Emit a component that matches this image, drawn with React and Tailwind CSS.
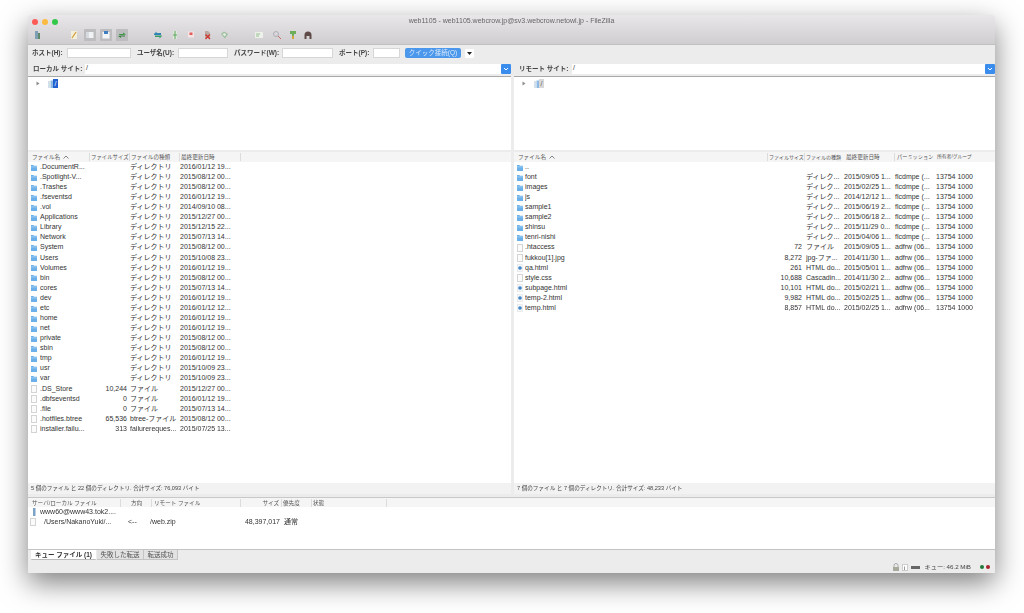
import React from "react";

const font = { fontFamily: '"Liberation Sans", "Noto Sans CJK JP", sans-serif' };

const localFiles = [
  [".DocumentR...", "", "ディレクトリ", "2016/01/12 19...", "d"],
  [".Spotlight-V...", "", "ディレクトリ", "2015/08/12 00...", "d"],
  [".Trashes", "", "ディレクトリ", "2015/08/12 00...", "d"],
  [".fseventsd", "", "ディレクトリ", "2016/01/12 19...", "d"],
  [".vol", "", "ディレクトリ", "2014/09/10 08...", "d"],
  ["Applications", "", "ディレクトリ", "2015/12/27 00...", "d"],
  ["Library", "", "ディレクトリ", "2015/12/15 22...", "d"],
  ["Network", "", "ディレクトリ", "2015/07/13 14...", "d"],
  ["System", "", "ディレクトリ", "2015/08/12 00...", "d"],
  ["Users", "", "ディレクトリ", "2015/10/08 23...", "d"],
  ["Volumes", "", "ディレクトリ", "2016/01/12 19...", "d"],
  ["bin", "", "ディレクトリ", "2015/08/12 00...", "d"],
  ["cores", "", "ディレクトリ", "2015/07/13 14...", "d"],
  ["dev", "", "ディレクトリ", "2016/01/12 19...", "d"],
  ["etc", "", "ディレクトリ", "2016/01/12 12...", "d"],
  ["home", "", "ディレクトリ", "2016/01/12 19...", "d"],
  ["net", "", "ディレクトリ", "2016/01/12 19...", "d"],
  ["private", "", "ディレクトリ", "2015/08/12 00...", "d"],
  ["sbin", "", "ディレクトリ", "2015/08/12 00...", "d"],
  ["tmp", "", "ディレクトリ", "2016/01/12 19...", "d"],
  ["usr", "", "ディレクトリ", "2015/10/09 23...", "d"],
  ["var", "", "ディレクトリ", "2015/10/09 23...", "d"],
  [".DS_Store", "10,244", "ファイル", "2015/12/27 00...", "f"],
  [".dbfseventsd", "0", "ファイル", "2016/01/12 19...", "f"],
  [".file", "0", "ファイル", "2015/07/13 14...", "f"],
  [".hotfiles.btree", "65,536", "btree-ファイル", "2015/08/12 00...", "f"],
  ["installer.failu...", "313", "failurereques...", "2015/07/25 13...", "f"],
];

const dirPerm = "flcdmpe (...";
const filePerm = "adfrw (06...";
const remoteFiles = [
  ["..", "", "", "", "", "", "d"],
  ["font", "", "ディレク...", "2015/09/05 1...", dirPerm, "13754 1000", "d"],
  ["images", "", "ディレク...", "2015/02/25 1...", dirPerm, "13754 1000", "d"],
  ["js", "", "ディレク...", "2014/12/12 1...", dirPerm, "13754 1000", "d"],
  ["sample1", "", "ディレク...", "2015/06/19 2...", dirPerm, "13754 1000", "d"],
  ["sample2", "", "ディレク...", "2015/06/18 2...", dirPerm, "13754 1000", "d"],
  ["shinsu", "", "ディレク...", "2015/11/29 0...", dirPerm, "13754 1000", "d"],
  ["tenri-nishi", "", "ディレク...", "2015/04/06 1...", dirPerm, "13754 1000", "d"],
  [".htaccess", "72", "ファイル", "2015/09/05 1...", filePerm, "13754 1000", "f"],
  ["fukkou[1].jpg", "8,272", "jpg-ファ...", "2014/11/30 1...", filePerm, "13754 1000", "f"],
  ["qa.html", "261", "HTML do...", "2015/05/01 1...", filePerm, "13754 1000", "h"],
  ["style.css", "10,688", "Cascadin...", "2014/11/30 2...", filePerm, "13754 1000", "f"],
  ["subpage.html", "10,101", "HTML do...", "2015/02/21 1...", filePerm, "13754 1000", "h"],
  ["temp-2.html", "9,982", "HTML do...", "2015/02/25 1...", filePerm, "13754 1000", "h"],
  ["temp.html", "8,857", "HTML do...", "2015/02/25 1...", filePerm, "13754 1000", "h"],
];

function FileIcon({ kind }) {
  if (kind === "d") {
    return (
      <svg width="6" height="7" viewBox="0 0 6 7" className="shrink-0">
        <path d="M0 1h2.400l.6.800H6V7H0z" fill="#6cb0ea" />
        <rect x="0" y="2.400" width="6" height="1" fill="#9accf2" />
      </svg>
    );
  }
  if (kind === "h") {
    return (
      <svg width="6" height="8" viewBox="0 0 6 8" className="shrink-0">
        <rect x="0.200" y="0.200" width="5.600" height="7.600" fill="#f4f6f8" stroke="#dcdcdc" strokeWidth="0.400" />
        <circle cx="3" cy="4" r="1.800" fill="#3f86c9" />
      </svg>
    );
  }
  return <div className="w-[6px] h-[8px] shrink-0 bg-[#fbfbfb] border-[0.5px] border-[#d4d4d4]" />;
}

function ToolIcon({ children, boxed }) {
  return (
    <div className={`w-[12px] h-[12px] flex items-center justify-center rounded-[1px] ${boxed ? "bg-[#bdbcbe]" : ""}`}>
      <svg width="10" height="10" viewBox="0 0 10 10">{children}</svg>
    </div>
  );
}

function Toolbar() {
  return (
    <div className="flex items-center h-[12px] pl-[3px] mt-[1px]">
      <ToolIcon>
        <rect x="3" y="1" width="3" height="8" fill="#7f9fb5" />
        <rect x="6" y="3" width="2" height="6" fill="#5f8a6a" />
      </ToolIcon>
      <div className="w-[25px]" />
      <ToolIcon>
        <rect x="2" y="1" width="6" height="8" fill="#f3efd8" />
        <path d="M3 8 7 2" stroke="#d39a38" strokeWidth="1.200" />
      </ToolIcon>
      <div className="w-[4px]" />
      <ToolIcon boxed>
        <rect x="1.500" y="2" width="7" height="6" fill="#f1f2f4" />
        <rect x="1.500" y="2" width="2.400" height="6" fill="#d6dce2" />
      </ToolIcon>
      <div className="w-[4px]" />
      <ToolIcon boxed>
        <rect x="1.500" y="2" width="7" height="6.500" fill="#f4f5f7" />
        <rect x="3" y="1" width="4" height="3" fill="#3f7fc0" />
      </ToolIcon>
      <div className="w-[4px]" />
      <ToolIcon boxed>
        <path d="M2 4h4V2.500L9 4.500 6 5H2z" fill="#3d9a48" />
        <path d="M8 6.500H4V8L1 6l3-.5h4z" fill="#3d7f45" />
      </ToolIcon>
      <div className="w-[24px]" />
      <ToolIcon>
        <path d="M1 4 3.500 1.500V3H8v2H1z" fill="#2f86b5" />
        <path d="M9 6 6.500 8.500V7H2V5.500h7z" fill="#3a9a68" />
      </ToolIcon>
      <div className="w-[5px]" />
      <ToolIcon>
        <rect x="3" y="1" width="4" height="8" fill="#dfe8dc" />
        <path d="M5 1v8M3 5h4" stroke="#5ca85c" strokeWidth="1" />
      </ToolIcon>
      <div className="w-[4px]" />
      <ToolIcon>
        <rect x="2" y="1.500" width="6" height="6" fill="#f6e4e4" />
        <rect x="3.500" y="2.500" width="3" height="2.500" fill="#e05a5a" />
      </ToolIcon>
      <div className="w-[4px]" />
      <ToolIcon>
        <path d="M3 1h3l2 2v5H3z" fill="#b9a9a0" />
        <path d="M3.500 4.500 8 9M8 4.500 3.500 9" stroke="#d2322d" strokeWidth="1.300" />
      </ToolIcon>
      <div className="w-[5px]" />
      <ToolIcon>
        <path d="M2 4 5 1.500 9 4 6 8.500z" fill="#9dbd9d" />
        <path d="M3.500 4.200 5.200 3l2 1.200L5.800 6.500z" fill="#e4eee2" />
      </ToolIcon>
      <div className="w-[23px]" />
      <ToolIcon>
        <rect x="1" y="2" width="8" height="6" fill="#eef0ea" />
        <path d="M2 4h4M2 6h3" stroke="#7db27d" strokeWidth="0.800" />
      </ToolIcon>
      <div className="w-[6px]" />
      <ToolIcon>
        <circle cx="4" cy="4" r="2.500" fill="none" stroke="#a9a9b5" strokeWidth="0.900" />
        <path d="M6 6l3 3" stroke="#c86a6a" strokeWidth="1" />
      </ToolIcon>
      <div className="w-[4px]" />
      <ToolIcon>
        <path d="M2 1h6v3H6v2H4V4H2z" fill="#6fae58" />
        <path d="M4 6h2v3H4z" fill="#d3a53a" />
      </ToolIcon>
      <div className="w-[3px]" />
      <ToolIcon>
        <path d="M1.500 9V5a3.500 3.500 0 0 1 7 0v4H6.500V6h-3v3z" fill="#5f4a48" />
      </ToolIcon>
    </div>
  );
}

function Field({ label, width, labelWidth }) {
  return (
    <div className="flex items-center shrink-0">
      <span className="text-[6.5px] text-[#444] font-bold whitespace-nowrap" style={{ width: labelWidth }}>{label}</span>
      <div className="h-[10px] bg-white border-[0.5px] border-[#d6d6d6]" style={{ width }} />
    </div>
  );
}

function SiteBar({ label, labelWidth }) {
  return (
    <div className="h-[16px] flex items-center pl-[5px] border-b border-[#a8a8a8]">
      <span className="text-[6.5px] text-[#444] font-bold shrink-0 whitespace-nowrap" style={{ width: labelWidth }}>{label}</span>
      <div className="h-[10px] flex-1 bg-white flex items-center pl-[1px] text-[7px] text-[#333] relative">
        /
        <div className="absolute right-0 top-0 w-[10px] h-[10px] rounded-[1px] bg-[#3b8ded] flex items-center justify-center">
          <svg width="6" height="4" viewBox="0 0 6 4"><path d="M1 1l2 2 2-2" fill="none" stroke="#fff" strokeWidth="1" /></svg>
        </div>
      </div>
    </div>
  );
}

function TreeRow({ selected }) {
  return (
    <div className="flex items-center h-[11px] mt-[1px] pl-[8px]">
      <svg width="4" height="5" viewBox="0 0 4 5"><path d="M0.500 0.500 3.500 2.500 0.500 4.500z" fill="#8b8b8b" /></svg>
      <div className="w-[6px]" />
      <svg width="7" height="8" viewBox="0 0 7 8">
        <rect x="2" y="1" width="2" height="7" fill="#d3dfea" />
        <rect x="4.500" y="0.500" width="2.500" height="7.500" fill="#8db9e2" />
      </svg>
      <div className={`h-[9px] w-[5px] text-[7px] leading-[9px] text-center ${selected ? "bg-[#1f5fd0] text-white" : "bg-[#d8d8d8] text-[#666]"}`}>/</div>
    </div>
  );
}

function HeaderCell({ width, children, right, sep = true, className = "" }) {
  return (
    <div
      className={`h-[8px] leading-[8px] whitespace-nowrap overflow-hidden shrink-0 ${sep ? "border-r border-[#dcdcdc]" : ""} ${right ? "text-right pr-[2px]" : "pl-[1px]"} ${className}`}
      style={{ width }}
    >
      {children}
    </div>
  );
}

function SortName() {
  return (
    <span className="inline-flex items-center gap-[3px]">ファイル名
      <svg width="6" height="4" viewBox="0 0 6 4"><path d="M0.500 3.500 3 1l2.500 2.500" fill="none" stroke="#666" strokeWidth="0.800" /></svg>
    </span>
  );
}

function LocalPane() {
  return (
    <div className="flex-1 flex flex-col bg-white">
      <div className="h-[10px] bg-[#f5f5f5] flex items-center pl-[3px] text-[5.6px] text-[#555] shrink-0">
        <HeaderCell width={59}><SortName /></HeaderCell>
        <HeaderCell width={40} className="text-[5.400px]">ファイルサイズ</HeaderCell>
        <HeaderCell width={50}>ファイルの種類</HeaderCell>
        <HeaderCell width={61}>最終更新日時</HeaderCell>
      </div>
      <div className="flex-1">
        {localFiles.map((f) => (
          <div key={f[0]} className="flex items-center h-[10.08px] text-[7px] text-[#333] whitespace-nowrap">
            <div className="w-[12px] pl-[3px] flex justify-start shrink-0"><FileIcon kind={f[4]} /></div>
            <div className="w-[50px] shrink-0 overflow-hidden">{f[0]}</div>
            <div className="w-[37px] shrink-0 text-right">{f[1]}</div>
            <div className="w-[3px] shrink-0" />
            <div className="w-[50px] shrink-0">{f[2]}</div>
            <div className="shrink-0">{f[3]}</div>
          </div>
        ))}
      </div>
      <div className="h-[11px] bg-[#f2f2f2] flex items-center pl-[3px] text-[5.6px] text-[#444]">
        5 個のファイル と 22 個のディレクトリ. 合計サイズ: 76,093 バイト
      </div>
    </div>
  );
}

function RemotePane() {
  return (
    <div className="flex-1 flex flex-col bg-white">
      <div className="h-[10px] bg-[#f5f5f5] flex items-center pl-[3px] text-[5.6px] text-[#555] shrink-0">
        <HeaderCell width={251}><SortName /></HeaderCell>
        <HeaderCell width={37} className="text-[5px]">ファイルサイズ</HeaderCell>
        <HeaderCell width={40} sep={false} className="text-[5px]">ファイルの種類</HeaderCell>
        <HeaderCell width={50}>最終更新日時</HeaderCell>
        <HeaderCell width={41} sep={false} className="pl-[2px] text-[5.200px]">パーミッション</HeaderCell>
        <HeaderCell width={39} sep={false} className="text-[4.800px]">所有者/グループ</HeaderCell>
      </div>
      <div className="flex-1">
        {remoteFiles.map((f) => (
          <div key={f[0]} className="flex items-center h-[10.08px] text-[7px] text-[#333] whitespace-nowrap">
            <div className="w-[11px] pl-[3px] shrink-0"><FileIcon kind={f[6]} /></div>
            <div className="w-[243px] shrink-0 overflow-hidden">{f[0]}</div>
            <div className="w-[34px] shrink-0 text-right">{f[1]}</div>
            <div className="w-[3px] shrink-0" />
            <div className="w-[39px] shrink-0 pl-[1px]">{f[2]}</div>
            <div className="w-[51px] shrink-0">{f[3]}</div>
            <div className="w-[41px] shrink-0">{f[4]}</div>
            <div className="shrink-0">{f[5]}</div>
          </div>
        ))}
      </div>
      <div className="h-[11px] bg-[#f2f2f2] flex items-center pl-[3px] text-[5.6px] text-[#444]">
        7 個のファイル と 7 個のディレクトリ. 合計サイズ: 48,233 バイト
      </div>
    </div>
  );
}

function Queue() {
  return (
    <div className="h-[52px] bg-white flex flex-col border-t border-[#c8c8c8]">
      <div className="h-[9px] bg-[#f5f5f5] flex items-center pl-[3px] text-[5.6px] text-[#555] shrink-0">
        <HeaderCell width={90}>サーバ/ローカル ファイル</HeaderCell>
        <HeaderCell width={31} className="text-center">方向</HeaderCell>
        <HeaderCell width={89} className="pl-[2px]">リモート ファイル</HeaderCell>
        <HeaderCell width={41} right>サイズ</HeaderCell>
        <HeaderCell width={30}>優先度</HeaderCell>
        <HeaderCell width={75}>状態</HeaderCell>
      </div>
      <div className="flex items-center h-[10px] text-[7px] text-[#333]">
        <div className="w-[12px] pl-[4px]">
          <svg width="4" height="8" viewBox="0 0 4 8"><rect x="1" y="0" width="2.500" height="8" fill="#7fa3c7" /></svg>
        </div>
        <span>www60@www43.tok2....</span>
      </div>
      <div className="flex items-center h-[10px] text-[7px] text-[#333]">
        <div className="w-[16px] pl-[2px]"><FileIcon kind="f" /></div>
        <div className="w-[84px]">/Users/NakanoYuki/...</div>
        <div className="w-[22px]">&lt;--</div>
        <div className="w-[92px]">/web.zip</div>
        <div className="w-[38px] text-right">48,397,017</div>
        <div className="pl-[4px]">通常</div>
      </div>
    </div>
  );
}

function Tabs() {
  return (
    <div className="h-[12px] flex items-start pl-[3px] border-t border-[#c4c4c4] text-[6.5px] text-[#555] bg-[#ececec] shrink-0">
      <div className="h-[10px] w-[65px] bg-white text-center leading-[9px] font-bold text-[#333] rounded-b-[1px] border-b border-[#bbb]">キュー ファイル (1)</div>
      <div className="h-[10px] w-[47px] ml-[1px] bg-[#e2e2e2] text-center leading-[10px] border-r border-b border-[#c4c4c4]">失敗した転送</div>
      <div className="h-[10px] w-[34px] bg-[#e2e2e2] text-center leading-[10px] border-r border-b border-[#c4c4c4]">転送成功</div>
    </div>
  );
}

function StatusBar() {
  return (
    <div className="h-[12px] bg-[#ececec] flex items-center justify-end text-[6.2px] text-[#444] shrink-0">
      <svg width="8" height="8" viewBox="0 0 8 8" className="mr-[2px]">
        <path d="M2 4V2.500a2 2 0 0 1 4 0V4" fill="none" stroke="#999" strokeWidth="0.800" />
        <rect x="1" y="4" width="6" height="4" fill="#a8a89c" />
      </svg>
      <div className="w-[6px] h-[7px] bg-white border-[0.5px] border-[#ccc] text-[6px] leading-[6px] text-center mr-[3px]">i</div>
      <div className="w-[9px] h-[3px] bg-[#666] mr-[5px]" />
      <span className="mr-[9px] whitespace-nowrap">キュー: 46.2 MiB</span>
      <div className="w-[4px] h-[4px] rounded-full bg-[#1f7a3a] mr-[2px]" />
      <div className="w-[4px] h-[4px] rounded-full bg-[#a8232f] mr-[5px]" />
    </div>
  );
}

export default function App() {
  return (
    <div className="w-[1024px] h-[613px] bg-white overflow-hidden pt-[15px] pl-[28px]" style={font}>
      <div className="w-[967px] h-[558px] flex flex-col bg-[#ececec] rounded-t-[4px] shadow-[0_10px_28px_rgba(0,0,0,0.5)] blur-[0.3px]">
        <div className="h-[30px] bg-gradient-to-b from-[#e9e7e9] to-[#cfcdcf] rounded-t-[4px] shrink-0 border-b border-[#c0c0c0] relative">
          <div className="flex items-center h-[13px] pl-[4px] gap-[4px]">
            <div className="w-[6px] h-[6px] rounded-full bg-[#fc5b57]" />
            <div className="w-[6px] h-[6px] rounded-full bg-[#fcbb40]" />
            <div className="w-[6px] h-[6px] rounded-full bg-[#34c84a]" />
            <div className="flex-1 text-center text-[7px] text-[#666] pr-[34px]">
              web1105 - web1105.webcrow.jp@sv3.webcrow.netowl.jp - FileZilla
            </div>
          </div>
          <Toolbar />
        </div>

        <div className="h-[16px] flex items-center pl-[4px] shrink-0">
          <Field label="ホスト(H):" labelWidth={35} width={64} />
          <div className="w-[6px]" />
          <Field label="ユーザ名(U):" labelWidth={41} width={50} />
          <div className="w-[6px]" />
          <Field label="パスワード(W):" labelWidth={48} width={51} />
          <div className="w-[6px]" />
          <Field label="ポート(P):" labelWidth={34} width={27} />
          <div className="w-[5px]" />
          <div className="w-[56px] h-[10px] rounded-[2px] bg-[#4a97ec] text-white/80 text-[6.5px] leading-[10px] text-center whitespace-nowrap">クイック接続(Q)</div>
          <div className="w-[4px]" />
          <div className="w-[9px] h-[9px] bg-white rounded-[1px] flex items-center justify-center">
            <svg width="5" height="3" viewBox="0 0 5 3"><path d="M0 0h5L2.500 3z" fill="#222" /></svg>
          </div>
        </div>

        <div className="flex flex-1 min-h-0">
          <div className="w-[483px] flex flex-col">
            <SiteBar label="ローカル サイト:" labelWidth={52} />
            <div className="h-[73px] bg-white shrink-0"><TreeRow selected /></div>
            <div className="h-[2px] shrink-0" />
            <LocalPane />
          </div>
          <div className="w-[3px] shrink-0" />
          <div className="flex-1 flex flex-col">
            <SiteBar label="リモート サイト:" labelWidth={53} />
            <div className="h-[73px] bg-white shrink-0"><TreeRow /></div>
            <div className="h-[2px] shrink-0" />
            <RemotePane />
          </div>
        </div>

        <div className="h-[3px] shrink-0" />
        <Queue />
        <Tabs />
        <StatusBar />
      </div>
    </div>
  );
}
